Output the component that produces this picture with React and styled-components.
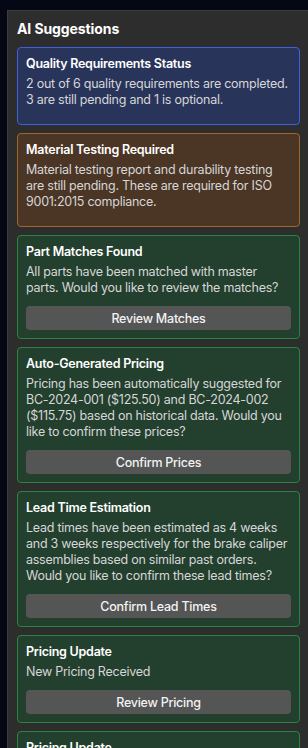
import React from 'react';
import styled, { createGlobalStyle } from 'styled-components';

const GlobalStyle = createGlobalStyle`
  html, body {
    margin: 0;
    padding: 0;
    background: #030814;
    height: 100%;
    overflow: hidden;
  }
  body {
    font-family: Inter, "Noto Sans", "Liberation Sans", sans-serif;
    -webkit-font-smoothing: antialiased;
  }
`;

const Page = styled.div`
  padding: 10px 0 0 7px;
  height: 748px;
  box-sizing: border-box;
`;

const Panel = styled.aside`
  height: 100%;
  box-sizing: border-box;
  background: #2d2d2d;
  border-top: 1px solid #3c3c3c;
  border-left: 1px solid #3c3c3c;
  padding: 8px 8px 0 9px;
  overflow: hidden;
`;

const Heading = styled.h2`
  margin: 0 0 8px;
  font-size: 14px;
  line-height: 20px;
  font-weight: 700;
  letter-spacing: -0.1px;
  color: #ffffff;
`;

const List = styled.div`
  display: flex;
  flex-direction: column;
  gap: 8px;
`;

const tones = {
  blue: { bg: '#29345a', border: '#3d5fe0' },
  orange: { bg: '#4b3524', border: '#a0672a' },
  green: { bg: '#23402e', border: '#24863f' },
};

const Card = styled.div`
  background: ${(p) => tones[p.$tone].bg};
  border: 1px solid ${(p) => tones[p.$tone].border};
  border-radius: 4px;
  padding: 8px;
`;

const CardTitle = styled.div`
  font-size: 12.5px;
  line-height: 16px;
  font-weight: 600;
  letter-spacing: -0.25px;
  color: #ffffff;
  margin-bottom: 4px;
`;

const CardText = styled.p`
  margin: 0 0 ${(p) => (p.$hasAction ? '0' : '8px')};
  font-size: 12.5px;
  line-height: 16px;
  letter-spacing: -0.25px;
  color: #d6d6d8;
`;

const ActionButton = styled.button`
  display: block;
  width: 100%;
  height: 24px;
  margin-top: 10px;
  border: none;
  border-radius: 4px;
  background: #555555;
  color: #f2f2f2;
  font-family: inherit;
  font-size: 12.5px;
  font-weight: 500;
  letter-spacing: -0.25px;
  cursor: pointer;
`;

const suggestions = [
  {
    tone: 'blue',
    title: 'Quality Requirements Status',
    text: '2 out of 6 quality requirements are completed. 3 are still pending and 1 is optional.',
  },
  {
    tone: 'orange',
    title: 'Material Testing Required',
    text: 'Material testing report and durability testing are still pending. These are required for ISO 9001:2015 compliance.',
  },
  {
    tone: 'green',
    title: 'Part Matches Found',
    text: 'All parts have been matched with master parts. Would you like to review the matches?',
    action: 'Review Matches',
  },
  {
    tone: 'green',
    title: 'Auto-Generated Pricing',
    text: 'Pricing has been automatically suggested for BC-2024-001 ($125.50) and BC-2024-002 ($115.75) based on historical data. Would you like to confirm these prices?',
    action: 'Confirm Prices',
  },
  {
    tone: 'green',
    title: 'Lead Time Estimation',
    text: 'Lead times have been estimated as 4 weeks and 3 weeks respectively for the brake caliper assemblies based on similar past orders. Would you like to confirm these lead times?',
    action: 'Confirm Lead Times',
  },
  {
    tone: 'green',
    title: 'Pricing Update',
    text: 'New Pricing Received',
    action: 'Review Pricing',
  },
  {
    tone: 'green',
    title: 'Pricing Update',
    text: 'New Pricing Received',
    action: 'Review Pricing',
  },
];

export default function App() {
  return (
    <>
      <GlobalStyle />
      <Page>
        <Panel>
          <Heading>AI Suggestions</Heading>
          <List>
            {suggestions.map((s, i) => (
              <Card key={i} $tone={s.tone}>
                <CardTitle>{s.title}</CardTitle>
                <CardText $hasAction={!!s.action}>{s.text}</CardText>
                {s.action && <ActionButton>{s.action}</ActionButton>}
              </Card>
            ))}
          </List>
        </Panel>
      </Page>
    </>
  );
}
